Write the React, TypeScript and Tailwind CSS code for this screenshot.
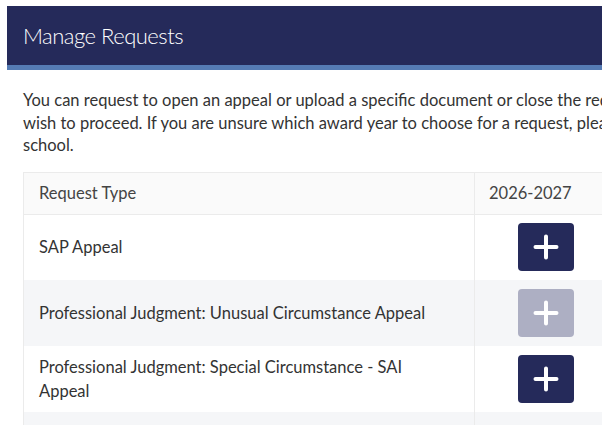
import React from 'react'

type Row = {
  label: string
  enabled: boolean
}

const rows: Row[] = [
  { label: 'SAP Appeal', enabled: true },
  { label: 'Professional Judgment: Unusual Circumstance Appeal', enabled: false },
  { label: 'Professional Judgment: Special Circumstance - SAI Appeal', enabled: true },
  { label: 'Professional Judgment: Dependency Override Appeal - Unaccompanied Homeless Youth Determination', enabled: true },
]

function PlusIcon() {
  return (
    <svg width="26" height="26" viewBox="0 0 26 26" fill="none">
      <path d="M13 2.5v21M2.5 13h21" stroke="white" strokeWidth="4" strokeLinecap="round" />
    </svg>
  )
}

export default function App() {
  return (
    <div className="h-screen overflow-hidden bg-white pt-[6px] pl-[7px] pr-[5px]" style={{ fontFamily: 'Lato, "Open Sans", sans-serif' }}>
      <div className="w-[595px] overflow-hidden">
        {/* Title bar */}
        <div className="h-[59px] bg-[#252a5a] flex items-center px-4">
          <h1 className="text-[22px] font-light text-white tracking-[-0.5px]">Manage Requests</h1>
        </div>
        <div className="h-[5px] bg-[#557bb4]" />

        <div className="px-4 pt-[19px]">
          <p className="text-[16.5px] leading-[22.5px] text-[#333] w-[900px]">
            <span className="block whitespace-nowrap">
              You can request to open an appeal or upload a specific document or close the request for the award year in which you
            </span>
            <span className="block whitespace-nowrap">
              wish to proceed. If you are unsure which award year to choose for a request, please contact the financial aid office at your
            </span>
            <span className="block whitespace-nowrap">school.</span>
          </p>

          <table className="mt-[15px] w-[593px] border-collapse table-fixed text-[16.5px] text-[#333]">
            <colgroup>
              <col className="w-[451px]" />
              <col className="w-[142px]" />
            </colgroup>
            <thead>
              <tr className="bg-[#fafafa] h-[42px]">
                <th className="text-left font-normal px-[15px] text-[#444] border border-[#ebebeb]">Request Type</th>
                <th className="text-left font-normal px-[14px] text-[#444] border border-[#ebebeb]">2026-2027</th>
              </tr>
            </thead>
            <tbody>
              {rows.map((r, i) => (
                <tr key={r.label} className={`h-[66px] ${i % 2 === 1 ? 'bg-[#f5f6f8]' : 'bg-white'}`}>
                  <td className={`pl-[15px] pr-[40px] leading-[24px] border-l border-r border-[#ebebeb] ${i === 3 ? 'py-[16px]' : ''}`}>
                    {r.label}
                  </td>
                  <td className="border-l border-[#ebebeb]">
                    <div className="flex justify-center">
                      <button
                        className={`w-[56px] h-[48px] rounded-[4px] flex items-center justify-center ${
                          r.enabled ? 'bg-[#252a5a]' : 'bg-[#adafc3]'
                        }`}
                      >
                        <PlusIcon />
                      </button>
                    </div>
                  </td>
                </tr>
              ))}
            </tbody>
          </table>
        </div>
      </div>
    </div>
  )
}
